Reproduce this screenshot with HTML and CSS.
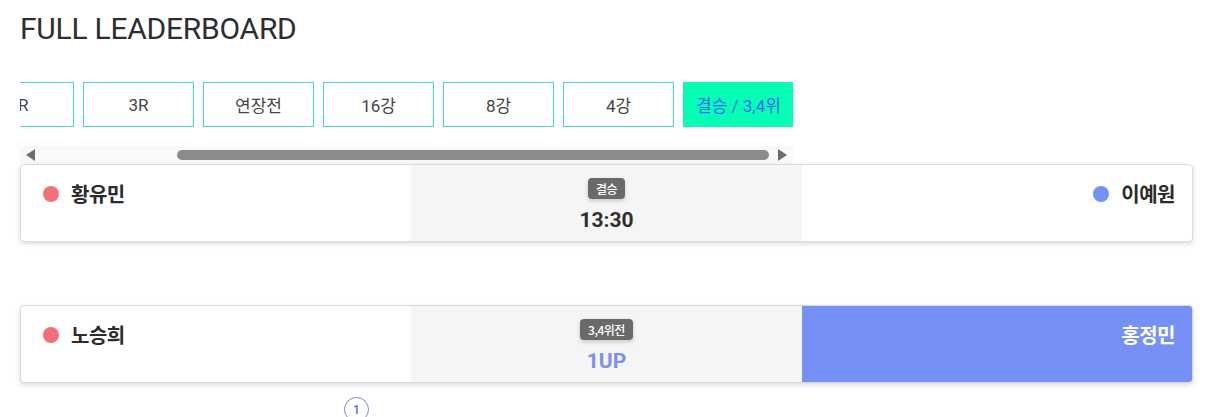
FILE: index.html
```html
<!DOCTYPE html>
<html lang="ko">
<head>
<meta charset="utf-8">
<title>Full Leaderboard</title>
<link rel="stylesheet" href="styles.css">
</head>
<body>
  <h1 class="title">FULL LEADERBOARD</h1>

  <div class="tabs-viewport">
    <div class="tabs-strip">
      <button class="tab">1R</button>
      <button class="tab">2R</button>
      <button class="tab">3R</button>
      <button class="tab">연장전</button>
      <button class="tab">16강</button>
      <button class="tab">8강</button>
      <button class="tab">4강</button>
      <button class="tab tab-active">결승 / 3,4위</button>
    </div>
  </div>
  <div class="scrollbar">
    <span class="sb-arrow sb-left"></span>
    <span class="sb-track"><span class="sb-thumb"></span></span>
    <span class="sb-arrow sb-right"></span>
  </div>

  <div class="match">
    <div class="col col-left">
      <span class="dot dot-red"></span>
      <span class="name">황유민</span>
    </div>
    <div class="col col-mid">
      <span class="badge">결승</span>
      <span class="score">13:30</span>
    </div>
    <div class="col col-right">
      <span class="dot dot-blue"></span>
      <span class="name">이예원</span>
    </div>
  </div>

  <div class="match match-second">
    <div class="col col-left">
      <span class="dot dot-red"></span>
      <span class="name">노승희</span>
    </div>
    <div class="col col-mid">
      <span class="badge">3,4위전</span>
      <span class="score score-blue">1UP</span>
    </div>
    <div class="col col-right col-winner">
      <span class="name name-white">홍정민</span>
    </div>
  </div>

  <div class="pager">
    <span class="page-circle">1</span>
  </div>
</body>
</html>
```

FILE: styles.css
```css
* {
  box-sizing: border-box;
}

html, body {
  margin: 0;
  padding: 0;
  background: #ffffff;
  overflow: hidden;
}

body {
  padding: 0 20px;
  font-family: Roboto, "Noto Sans CJK KR", sans-serif;
  color: #333333;
}

.title {
  margin: 11px 0 35px;
  font-size: 30px;
  line-height: 36px;
  font-weight: 400;
  color: #2e2e2e;
  letter-spacing: -0.25px;
}

.tabs-viewport {
  width: 773px;
  height: 45px;
  overflow: hidden;
}

.tabs-strip {
  display: flex;
  gap: 9px;
  margin-left: -177px;
}

.tab {
  flex: 0 0 111px;
  height: 45px;
  border: 1px solid #44dcc3;
  background: #ffffff;
  font-family: Roboto, "Noto Sans CJK KR", sans-serif;
  font-size: 17px;
  color: #444444;
  padding: 0;
}

.tab-active {
  background: #05fdb6;
  border-color: #05fdb6;
  color: #2f6cf2;
}

.scrollbar {
  width: 773px;
  height: 18px;
  margin-top: 19px;
  display: flex;
  align-items: center;
  background: #f9f9f9;
}

.sb-arrow {
  width: 0;
  height: 0;
  border-top: 6px solid transparent;
  border-bottom: 6px solid transparent;
}

.sb-left {
  margin-left: 6px;
  border-right: 9px solid #6d6d6d;
}

.sb-right {
  margin-right: 6px;
  border-left: 9px solid #6d6d6d;
}

.sb-track {
  flex: 1;
  height: 10px;
  margin: 0 9px 0 142px;
}

.sb-thumb {
  display: block;
  width: 592px;
  height: 10px;
  border-radius: 5px;
  background: #8b8b8b;
}

.match {
  display: grid;
  grid-template-columns: 1fr 1fr 1fr;
  height: 78px;
  border: 1px solid #dcdcdc;
  border-radius: 4px;
  box-shadow: 0 2px 5px rgba(0, 0, 0, 0.14);
  background: #ffffff;
  overflow: hidden;
}

.match-second {
  margin-top: 63px;
  border-color: #d8d8e4;
}

.col {
  display: flex;
  align-items: flex-start;
  padding: 16px 17px 0 22px;
  gap: 12px;
}

.col-right {
  justify-content: flex-end;
}

.col-mid {
  background: #f5f5f5;
  flex-direction: column;
  align-items: center;
  padding: 13px 0 0;
  gap: 8px;
}

.col-winner {
  background: #7690f5;
}

.dot {
  width: 16px;
  height: 16px;
  border-radius: 50%;
  margin-top: 5px;
  flex: 0 0 16px;
}

.dot-red {
  background: #f36f7b;
}

.dot-blue {
  background: #7392f2;
}

.name {
  font-family: "Noto Sans CJK KR", sans-serif;
  font-size: 20px;
  line-height: 26px;
  font-weight: 700;
  color: #2b2b2b;
  letter-spacing: -0.5px;
}

.name-white {
  color: #ffffff;
}

.badge {
  display: inline-block;
  height: 21px;
  padding: 0 8px;
  border-radius: 4px;
  background: #6a6a6a;
  color: #ffffff;
  font-family: "Noto Sans CJK KR", sans-serif;
  font-size: 12px;
  line-height: 21px;
  font-weight: 500;
  letter-spacing: -0.5px;
  box-shadow: 0 2px 4px rgba(0, 0, 0, 0.18);
}

.score {
  font-size: 21px;
  line-height: 26px;
  font-weight: 700;
  color: #2f2f2f;
}

.score-blue {
  color: #7a8ff0;
}

.pager {
  margin-top: 14px;
  padding-left: 324px;
}

.page-circle {
  display: inline-flex;
  align-items: center;
  justify-content: center;
  width: 25px;
  height: 25px;
  border: 1px solid #7d84e0;
  border-radius: 50%;
  font-size: 12px;
  font-weight: 500;
  color: #5e6ad6;
}
```
